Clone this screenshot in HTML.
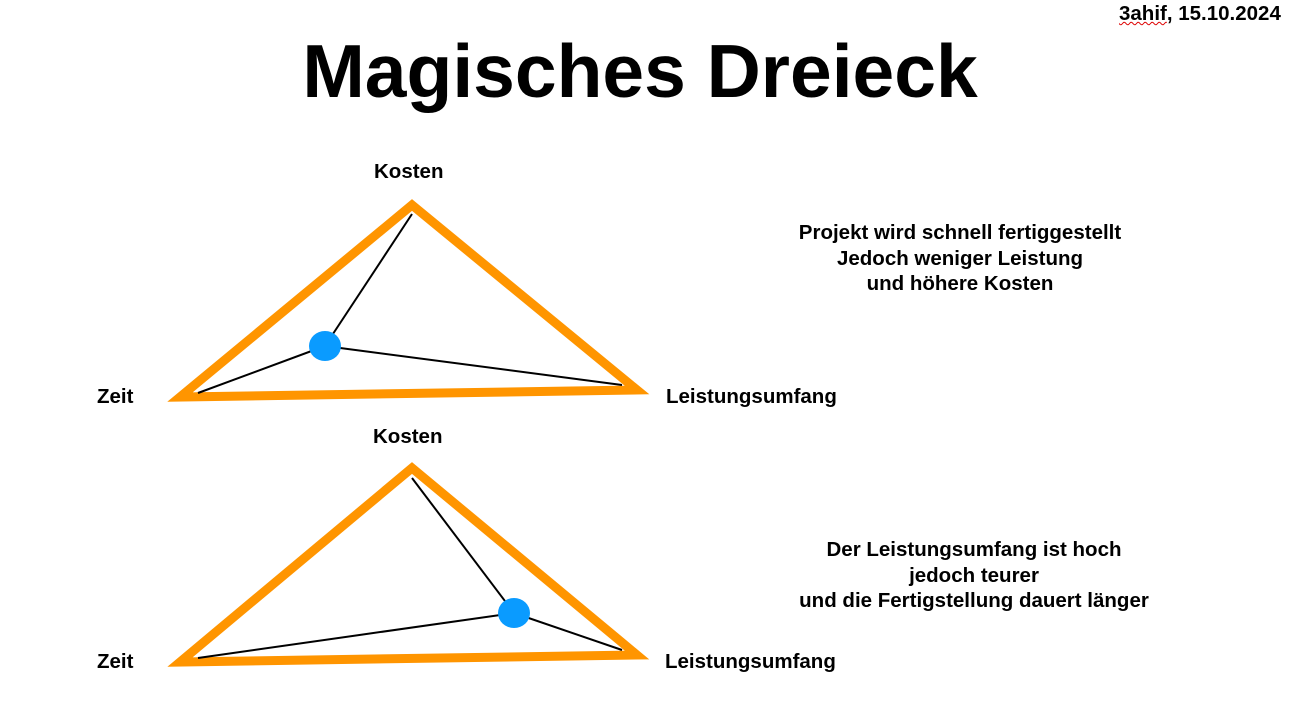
<!DOCTYPE html>
<html><head><meta charset="utf-8"><style>
html,body{margin:0;padding:0;background:#fff;width:1295px;height:720px;overflow:hidden;font-family:"Liberation Sans",Arial,sans-serif;}
.t{position:absolute;font-weight:bold;color:#000;white-space:nowrap;font-size:20.5px;line-height:24px;}
</style></head><body>
<div class="t" style="left:0;width:1280px;top:27px;text-align:center;font-size:75px;line-height:88px;">Magisches Dreieck</div>
<div class="t" style="left:1119px;top:2px;"><span style="text-decoration:underline wavy #d00;text-decoration-thickness:1px;">3ahif</span>, 15.10.2024</div>
<svg width="1295" height="720" style="position:absolute;left:0;top:0">
<g fill="none" stroke-linejoin="miter">
<polygon points="412,205 180,397 637,390" stroke="#FF9500" stroke-width="9"/>
<polygon points="412,468 180,662 637,655" stroke="#FF9500" stroke-width="9"/>
<g stroke="#000" stroke-width="2">
<line x1="412" y1="214" x2="325" y2="346"/><line x1="325" y1="346" x2="198" y2="393"/><line x1="325" y1="346" x2="622" y2="385"/>
<line x1="412" y1="478" x2="514" y2="613"/><line x1="514" y1="613" x2="198" y2="658"/><line x1="514" y1="613" x2="622" y2="650"/>
</g></g>
<ellipse cx="325" cy="346" rx="16" ry="15" fill="#0A9BFF"/>
<ellipse cx="514" cy="613" rx="16" ry="15" fill="#0A9BFF"/>
</svg>
<div class="t" style="left:374px;top:160px;">Kosten</div>
<div class="t" style="left:97px;top:385px;">Zeit</div>
<div class="t" style="left:666px;top:385px;">Leistungsumfang</div>
<div class="t" style="left:373px;top:425px;">Kosten</div>
<div class="t" style="left:97px;top:650px;">Zeit</div>
<div class="t" style="left:665px;top:650px;">Leistungsumfang</div>
<div class="t" style="left:760px;width:400px;top:220px;text-align:center;line-height:25.5px;">Projekt wird schnell fertiggestellt<br>Jedoch weniger Leistung<br>und höhere Kosten</div>
<div class="t" style="left:774px;width:400px;top:537px;text-align:center;line-height:25.5px;">Der Leistungsumfang ist hoch<br>jedoch teurer<br>und die Fertigstellung dauert länger</div>
</body></html>
